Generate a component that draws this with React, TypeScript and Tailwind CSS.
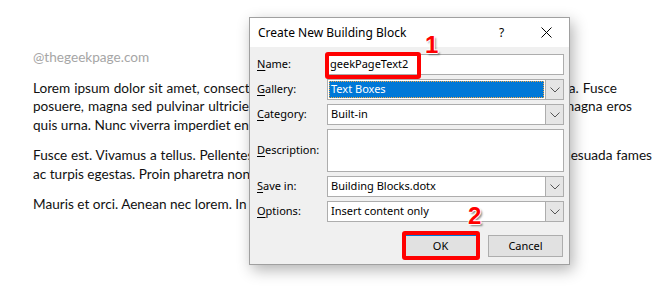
import React from "react";

const Chevron = () => (
  <svg width="10" height="6" viewBox="0 0 10 6" fill="none">
    <path d="M0.5 0.5 L5 5 L9.5 0.5" stroke="#555" strokeWidth="1" />
  </svg>
);

const DropBtn = () => (
  <div className="w-[18px] self-stretch flex items-center justify-center bg-[#e5e5e5] border-l border-[#adadad]">
    <Chevron />
  </div>
);

const Label = ({ k, rest }: { k: string; rest: string }) => (
  <div className="flex items-center">
    <span>
      <span className="underline underline-offset-[2px]">{k}</span>
      {rest}
    </span>
  </div>
);

export default function App() {
  return (
    <div className="relative w-[671px] h-[296px] bg-white overflow-hidden">
      <div className="[font-family:Lato,sans-serif] text-[13.6px] leading-[18.5px] text-[#111] pl-[33px] pt-[48px]">
        <p className="text-[#a6a6a6] mb-[12px]">@thegeekpage.com</p>
        <div className="mb-[12px]">
          <div className="w-[584px] whitespace-nowrap [text-align-last:justify]">
            Lorem ipsum dolor sit amet, consectetuer adipiscing elit. Maecenas porttitor congue massa. Fusce
          </div>
          <div className="w-[599px] whitespace-nowrap [text-align-last:justify]">
            posuere, magna sed pulvinar ultricies, purus lectus malesuada libero, sit amet commodo magna eros
          </div>
          <div>quis urna. Nunc viverra imperdiet enim.</div>
        </div>
        <div className="mb-[12px]">
          <div className="w-[619px] whitespace-nowrap [text-align-last:justify]">
            Fusce est. Vivamus a tellus. Pellentesque habitant morbi tristique senectus et netus et malesuada fames
          </div>
          <div>ac turpis egestas. Proin pharetra nonummy pede.</div>
        </div>
        <div>Mauris et orci. Aenean nec lorem. In porttitor. Donec laoreet nonummy augue.</div>
      </div>

      <div className="absolute left-[249px] top-[17px] w-[321px] h-[248px] border border-[#a0a0a0] bg-[#f0f0f0] shadow-[3px_5px_14px_rgba(0,0,0,0.3)] flex flex-col [font-family:'Noto_Sans',sans-serif] text-[11px] text-black">
        <div className="h-[29px] bg-white flex items-center pl-[8px]">
          <span className="text-[12px]">Create New Building Block</span>
          <div className="ml-auto flex h-full">
            <div className="w-[45px] flex items-center justify-center text-[12px]">?</div>
            <div className="w-[45px] flex items-center justify-center">
              <svg width="11" height="11" viewBox="0 0 11 11">
                <path d="M0.5 0.5 L10.5 10.5 M10.5 0.5 L0.5 10.5" stroke="#000" strokeWidth="1" />
              </svg>
            </div>
          </div>
        </div>

        <div className="flex-1 flex flex-col pl-[7px] pr-[5px] pt-[7px] pb-[7px]">
          <div className="grid grid-cols-[70px_1fr] grid-rows-[21px_21px_21px_43px_21px_21px] gap-y-[4px]">
            <Label k="N" rest="ame:" />
            <div className="border border-[#adadad] bg-white flex items-center pl-[2px]">geekPageText2</div>

            <Label k="G" rest="allery:" />
            <div className="border border-[#adadad] bg-white flex">
              <div className="flex-1 m-[1px] bg-[#0078d7] border border-dotted border-[#f0a848] text-white flex items-center pl-[1px]">
                Text Boxes
              </div>
              <DropBtn />
            </div>

            <Label k="C" rest="ategory:" />
            <div className="border border-[#adadad] bg-white flex">
              <div className="flex-1 flex items-center pl-[3px]">Built-in</div>
              <DropBtn />
            </div>

            <Label k="D" rest="escription:" />
            <div className="border border-[#adadad] bg-white" />

            <Label k="S" rest="ave in:" />
            <div className="border border-[#adadad] bg-white flex">
              <div className="flex-1 flex items-center pl-[3px]">Building Blocks.dotx</div>
              <DropBtn />
            </div>

            <Label k="O" rest="ptions:" />
            <div className="border border-[#adadad] bg-white flex">
              <div className="flex-1 flex items-center pl-[3px]">Insert content only</div>
              <DropBtn />
            </div>
          </div>

          <div className="mt-auto flex justify-end gap-[10px] pr-[1px]">
            <div className="w-[75px] h-[22px] border border-[#0078d7] bg-[#e1e1e1] flex items-center justify-center">OK</div>
            <div className="w-[75px] h-[22px] border border-[#adadad] bg-[#e1e1e1] flex items-center justify-center">Cancel</div>
          </div>
        </div>

        <div className="absolute left-[75px] top-[34px] w-[96px] h-[27px] border-[4px] border-[#ff0000] rounded-[3px]" />
        <div className="absolute left-[152px] top-[213px] w-[78px] h-[29px] border-[4px] border-[#ff0000] rounded-[3px]" />
        <div className="absolute left-[175px] top-[15px] [font-family:'Liberation_Sans',sans-serif] font-bold text-[24px] leading-none text-[#ff0000] [text-shadow:1px_0_0_#fff,-1px_0_0_#fff,0_1px_0_#fff,0_-1px_0_#fff,2px_2px_2px_rgba(0,0,0,0.45)]">
          1
        </div>
        <div className="absolute left-[218px] top-[186px] [font-family:'Liberation_Sans',sans-serif] font-bold text-[24px] leading-none text-[#ff0000] [text-shadow:1px_0_0_#fff,-1px_0_0_#fff,0_1px_0_#fff,0_-1px_0_#fff,2px_2px_2px_rgba(0,0,0,0.45)]">
          2
        </div>
      </div>
    </div>
  );
}
